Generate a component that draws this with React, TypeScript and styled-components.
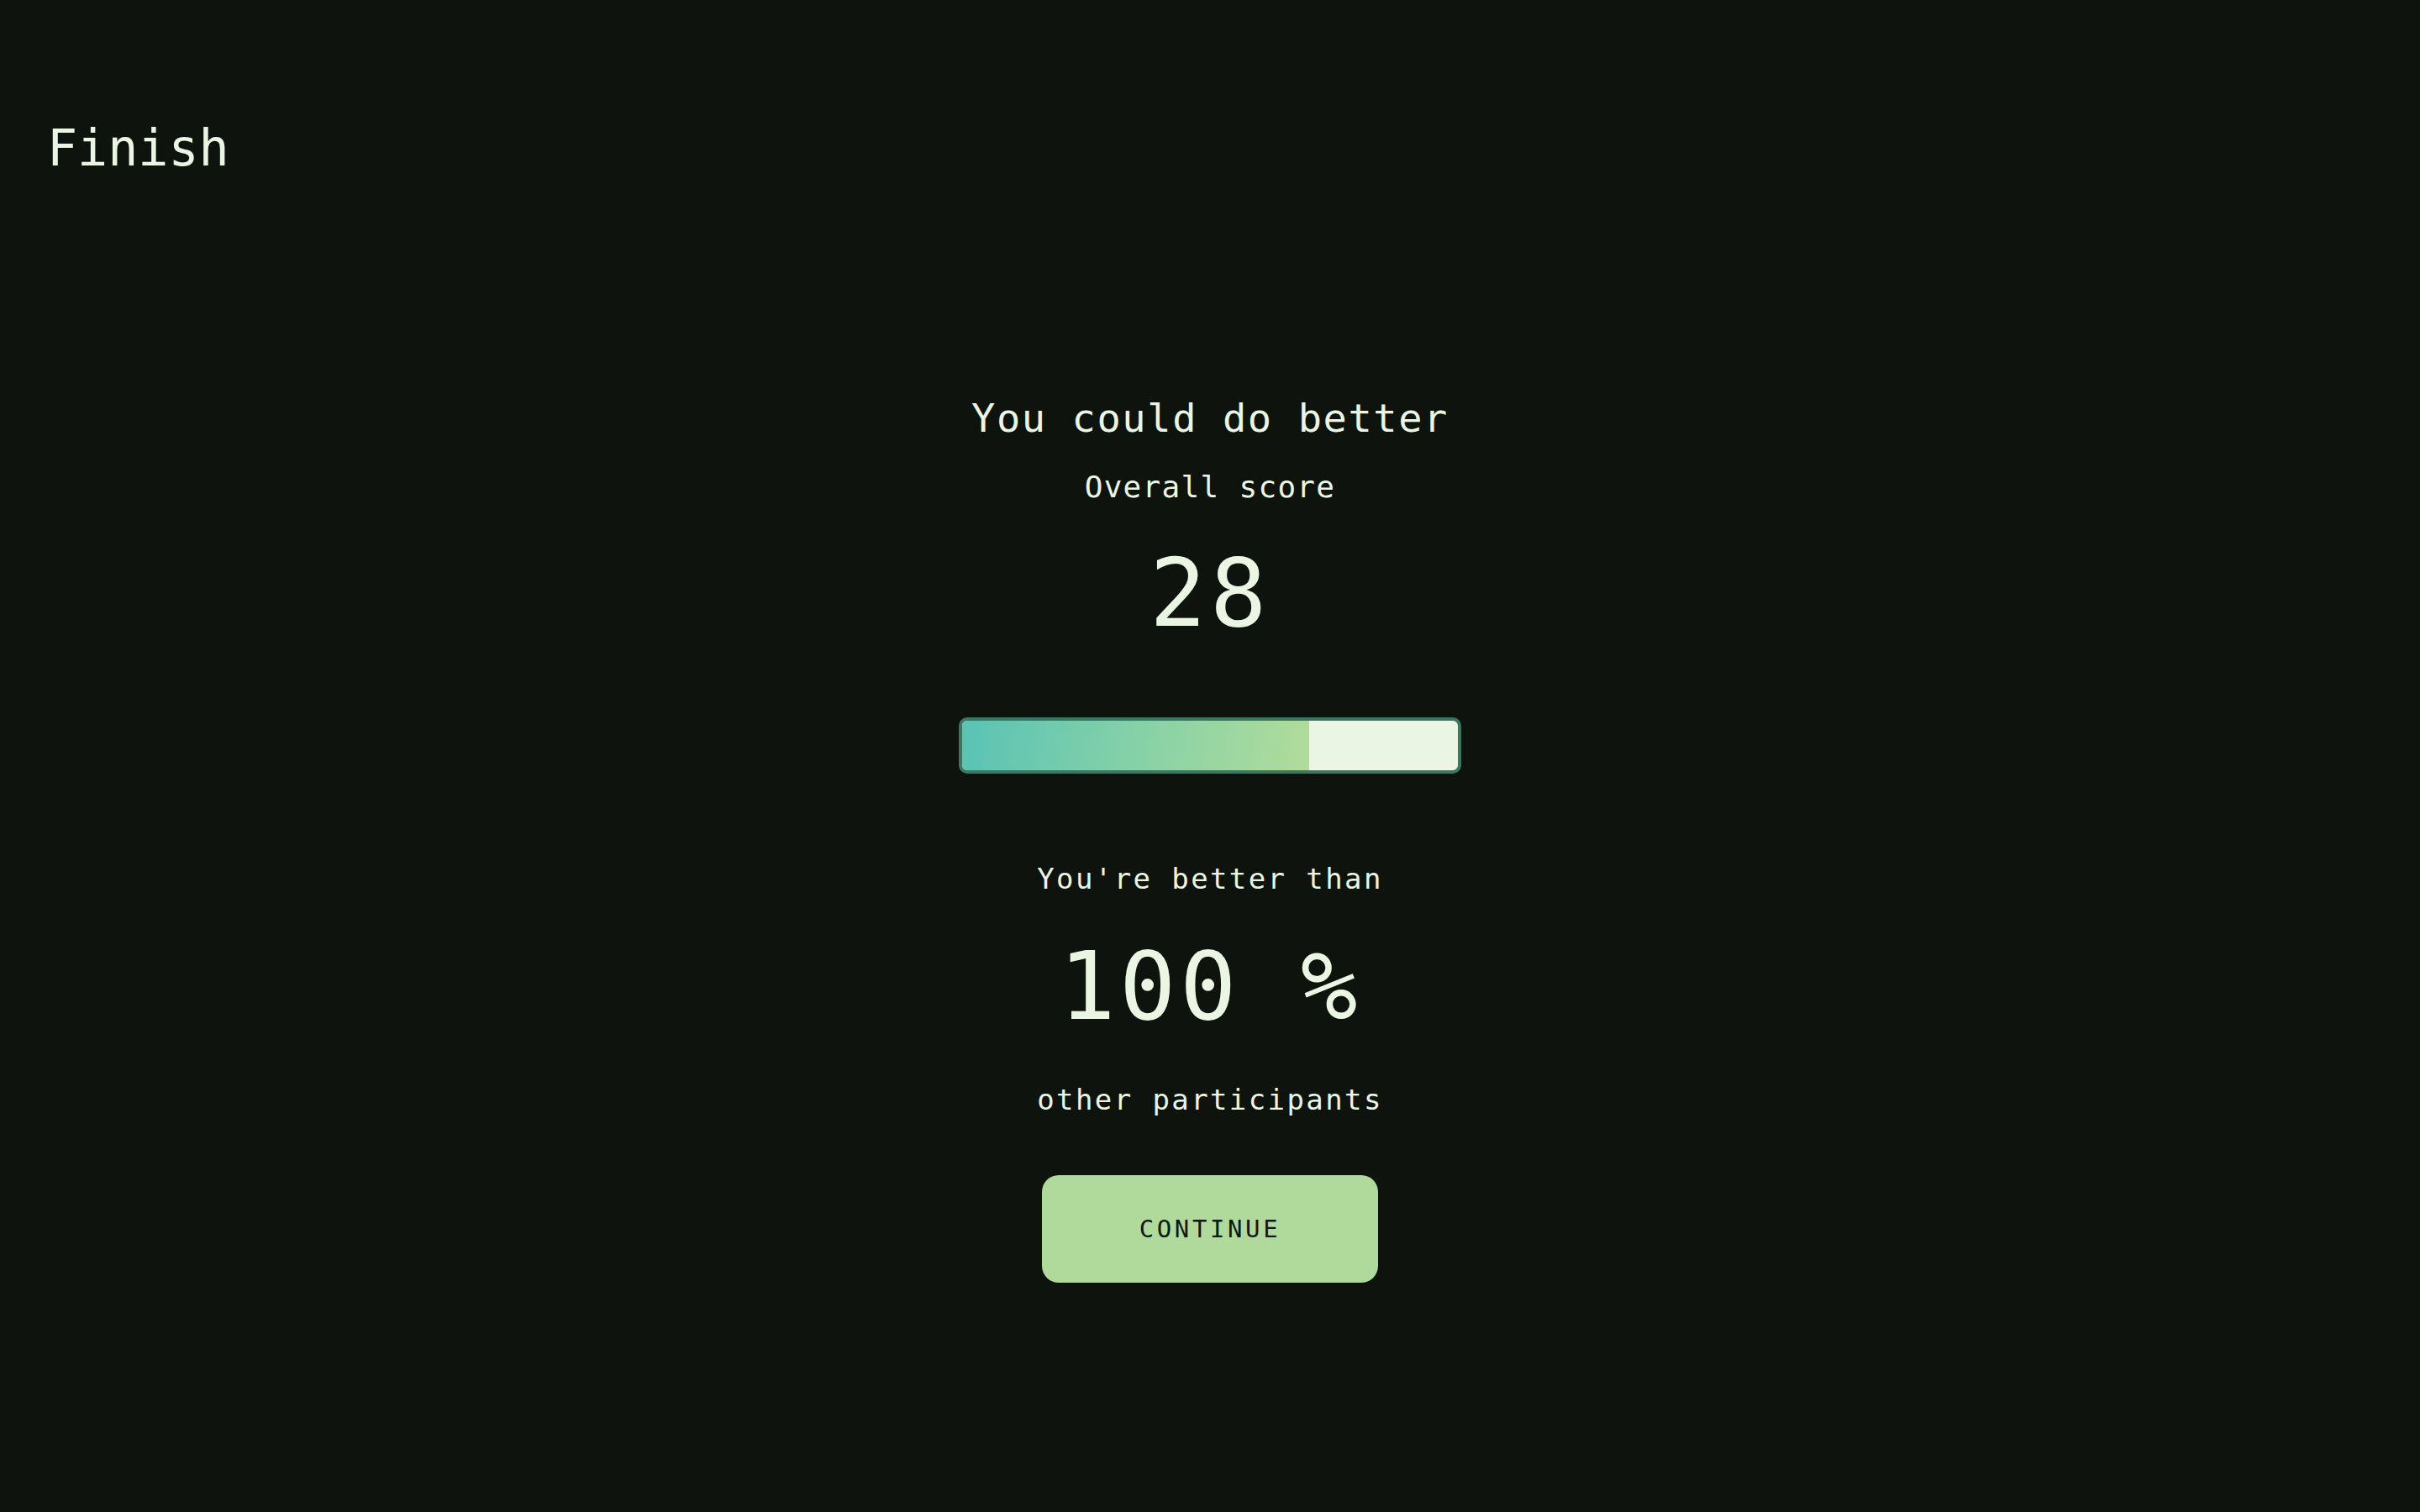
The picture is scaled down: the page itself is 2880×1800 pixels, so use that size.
import styled, { createGlobalStyle } from "styled-components";

const GlobalStyle = createGlobalStyle`
  html, body {
    margin: 0;
    padding: 0;
    background: #0e130e;
  }
  body {
    font-family: "DejaVu Sans Mono", "Liberation Mono", monospace;
    color: #eaf5e4;
  }
`

const Page = styled.div`
  min-height: 100vh;
  display: flex;
  flex-direction: column;
  background: #0e130e;
`

const Header = styled.header`
  padding: 146px 56px 0;
`

const PageTitle = styled.h1`
  margin: 0;
  font-size: 60px;
  font-weight: 400;
  line-height: 1;
  color: #eaf5e4;
`

const Result = styled.main`
  display: flex;
  flex-direction: column;
  align-items: center;
  padding-top: 268px;
`

const Verdict = styled.h2`
  margin: 0;
  font-size: 47px;
  font-weight: 400;
  line-height: 1;
  letter-spacing: 1.6px;
`

const Label = styled.p<{ $gap: number; $size: number; $spacing: number }>`
  margin: ${p => p.$gap}px 0 0;
  font-size: ${p => p.$size}px;
  line-height: 1;
  letter-spacing: ${p => p.$spacing}px;
`

const BigNumber = styled.div<{ $gap: number }>`
  margin-top: ${p => p.$gap}px;
  font-size: 112px;
  line-height: 1;
  letter-spacing: 4.5px;
`

const Track = styled.div`
  margin-top: 92px;
  width: 598px;
  height: 67px;
  box-sizing: border-box;
  border: 4px solid #3d7563;
  border-radius: 10px;
  background: #eaf5e4;
  overflow: hidden;
  display: flex;
`

const Fill = styled.div`
  height: 100%;
  border-radius: 6px 0 0 6px;
  background: linear-gradient(100deg, #59c3b5 0%, #8ad2a6 55%, #b1dc9a 100%);
`

const ContinueButton = styled.button`
  margin-top: 73px;
  width: 400px;
  height: 128px;
  border: none;
  border-radius: 20px;
  background: #b0da9b;
  color: #0f1a10;
  font-family: "DejaVu Sans Mono", "Liberation Mono", monospace;
  font-size: 29px;
  letter-spacing: 3.6px;
  cursor: pointer;
`

const progress = 70

const App = () => {
    return (
        <Page>
            <GlobalStyle />
            <Header>
                <PageTitle>Finish</PageTitle>
            </Header>
            <Result>
                <Verdict>You could do better</Verdict>
                <Label $gap={41} $size={36} $spacing={1.3}>Overall score</Label>
                <BigNumber $gap={52}>28</BigNumber>
                <Track>
                    <Fill style={{ width: `${progress}%` }} />
                </Track>
                <Label $gap={108} $size={34} $spacing={2.4}>You're better than</Label>
                <BigNumber $gap={55}>100 %</BigNumber>
                <Label $gap={62} $size={34} $spacing={2.4}>other participants</Label>
                <ContinueButton>CONTINUE</ContinueButton>
            </Result>
        </Page>
    )
}

export default App;
